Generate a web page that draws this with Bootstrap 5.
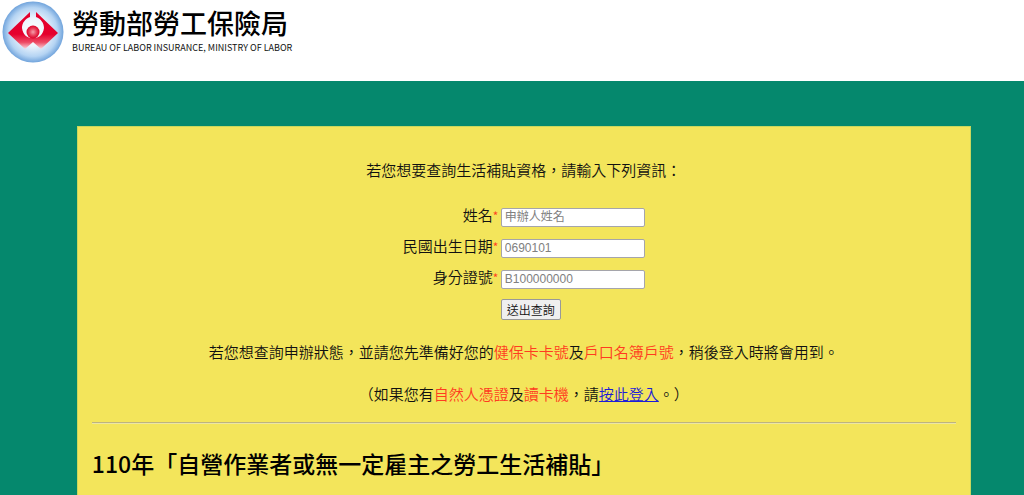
<!DOCTYPE html>
<html lang="zh-Hant">
<head>
<meta charset="utf-8">
<meta name="viewport" content="width=device-width, initial-scale=1">
<title>勞動部勞工保險局</title>
<link href="https://cdn.jsdelivr.net/npm/bootstrap@5.3.0/dist/css/bootstrap.min.css" rel="stylesheet">
<style>
body{font-family:"Noto Sans CJK TC",sans-serif;font-size:15px;line-height:22px;color:#111;background:#fff}
.site-head{height:81px;padding:1px 2px}
.site-logo{width:62px;height:62px}
.site-name{font-size:27px;line-height:36px;font-weight:500;color:#000;margin:0}
.site-sub{font-family:"Noto Sans CJK TC",sans-serif;font-size:9px;line-height:14px;color:#111}
.stage{background:#05886d;padding:45px 5.2% 0 7.5%}
.panel{background:#f3e55b;border:1px solid #c9d75e;border-bottom:0;padding:32px 14px 14px}
.panel p,.query{font-weight:350}
.query{grid-template-columns:auto 144px;grid-auto-rows:22px;column-gap:3px;row-gap:9px;width:max-content;max-width:100%;margin:25px auto 20px}
.query label{text-align:right;line-height:18px}
.query label span{color:#ff3b20;font-size:12px;line-height:1;display:inline-block;width:5px}
.query input{width:144px;height:19px;padding:0 3px;border:1px solid #a5a5ab;border-radius:2px;font:400 12px "Liberation Sans","Noto Sans CJK TC",sans-serif;background:#fff}
.query input::placeholder{color:#808080;opacity:1}
.query button{grid-column:2;justify-self:start;height:21px;padding:0 5px;border:1px solid #999;border-radius:2px;background:#efefef;color:#111;font-size:12px;line-height:18px;font-weight:350}
.hot{color:#ff3b20}
.panel a{color:#1c1cd8}
.panel hr{margin:17px 0 24px;border:0;border-top:1px solid #bdb380;border-bottom:1px solid #ece6a4;opacity:1}
.panel h2{font-size:23px;line-height:30px;font-weight:500;color:#000;margin:0}
</style>
</head>
<body class="min-vh-100 d-flex flex-column">
<header class="site-head d-flex align-items-start gap-2">
<svg class="site-logo flex-shrink-0" viewBox="0 0 62 62" aria-hidden="true">
<defs>
<radialGradient id="disc"><stop offset="0" stop-color="#fff"/><stop offset=".45" stop-color="#edf5fd"/><stop offset=".8" stop-color="#b5d4f3"/><stop offset="1" stop-color="#71a4dc"/></radialGradient>
<linearGradient id="wing" x1="0" y1="0" x2="0" y2="1"><stop offset=".6" stop-color="#e5002d"/><stop offset=".82" stop-color="#ed4b65"/><stop offset="1" stop-color="#fbd9df"/></linearGradient>
<radialGradient id="ball"><stop offset="0" stop-color="#f5a0ac"/><stop offset=".5" stop-color="#e94862"/><stop offset="1" stop-color="#dc0027"/></radialGradient>
</defs>
<circle cx="31" cy="31" r="30.5" fill="url(#disc)"/>
<path fill="url(#wing)" d="M28 11 6 32 23 48 31 41 39 48 56 32 34 11V16C39 18 42 22 42 27C41 34 37 37 31 37C25 37 21 34 20 27C20 22 23 18 28 16Z"/>
<circle cx="31" cy="31" r="6.5" fill="url(#ball)"/>
</svg>
<div class="pt-1">
<h1 class="site-name">勞動部勞工保險局</h1>
<div class="site-sub">BUREAU OF LABOR INSURANCE, MINISTRY OF LABOR</div>
</div>
</header>
<main class="stage flex-grow-1 d-flex">
<div class="panel flex-grow-1">
<p class="text-center m-0">若您想要查詢生活補貼資格，請輸入下列資訊：</p>
<form class="query d-grid">
<label for="name">姓名<span>*</span></label><input id="name" class="align-self-center" type="text" placeholder="申辦人姓名">
<label for="birth">民國出生日期<span>*</span></label><input id="birth" class="align-self-center" type="text" placeholder="0690101">
<label for="idno">身分證號<span>*</span></label><input id="idno" class="align-self-center" type="text" placeholder="B100000000">
<button type="submit">送出查詢</button>
</form>
<p class="text-center m-0">若您想查詢申辦狀態，並請您先準備好您的<span class="hot">健保卡卡號</span>及<span class="hot">戶口名簿戶號</span>，稍後登入時將會用到。</p>
<p class="text-center mb-0 mt-3 pt-1">（如果您有<span class="hot">自然人憑證</span>及<span class="hot">讀卡機</span>，請<a href="#">按此登入</a>。）</p>
<hr>
<h2>110年「自營作業者或無一定雇主之勞工生活補貼」</h2>
</div>
</main>
<script src="https://cdn.jsdelivr.net/npm/bootstrap@5.3.0/dist/js/bootstrap.bundle.min.js"></script>
</body>
</html>
